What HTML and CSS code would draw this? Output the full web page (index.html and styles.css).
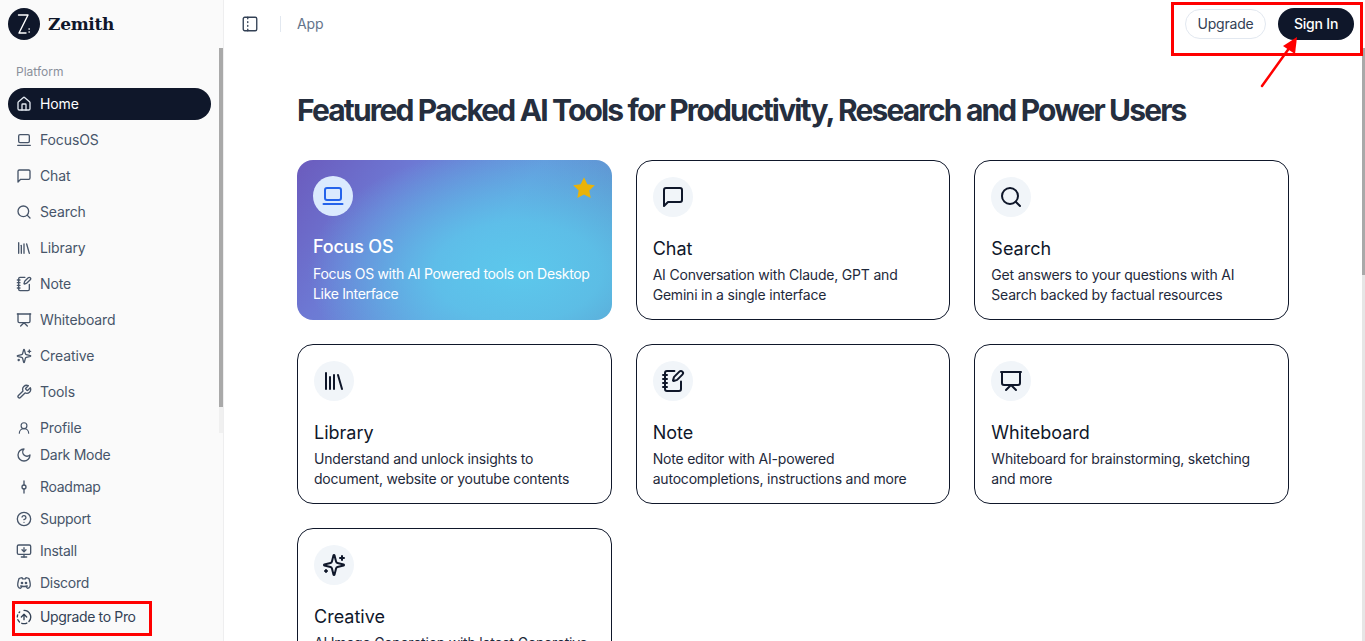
FILE: index.html
```html
<!DOCTYPE html>
<html lang="en">
<head>
<meta charset="utf-8">
<title>Zemith</title>
<link rel="stylesheet" href="styles.css">
</head>
<body>
<svg class="sprite" aria-hidden="true">
  <symbol id="i-home" viewBox="0 0 24 24"><path d="M15 21v-8a1 1 0 0 0-1-1h-4a1 1 0 0 0-1 1v8"/><path d="M3 10a2 2 0 0 1 .709-1.528l7-5.999a2 2 0 0 1 2.582 0l7 5.999A2 2 0 0 1 21 10v9a2 2 0 0 1-2 2H5a2 2 0 0 1-2-2z"/></symbol>
  <symbol id="i-laptop" viewBox="0 0 24 24"><rect x="4" y="4" width="16" height="12" rx="2"/><path d="M2.5 20h19"/></symbol>
  <symbol id="i-chat" viewBox="0 0 24 24"><path d="M21 15a2 2 0 0 1-2 2H7l-4 4V5a2 2 0 0 1 2-2h14a2 2 0 0 1 2 2z"/></symbol>
  <symbol id="i-search" viewBox="0 0 24 24"><circle cx="11" cy="11" r="8"/><path d="m21 21-4.3-4.3"/></symbol>
  <symbol id="i-library" viewBox="0 0 24 24"><path d="m16 6 4 14"/><path d="M12 6v14"/><path d="M8 8v12"/><path d="M4 4v16"/></symbol>
  <symbol id="i-note" viewBox="0 0 24 24"><path d="M13.4 2H6a2 2 0 0 0-2 2v16a2 2 0 0 0 2 2h12a2 2 0 0 0 2-2v-7.4"/><path d="M2 6h4"/><path d="M2 10h4"/><path d="M2 14h4"/><path d="M2 18h4"/><path d="M21.378 5.626a1 1 0 1 0-3.004-3.004l-5.01 5.012a2 2 0 0 0-.506.854l-.837 2.87a.5.5 0 0 0 .62.62l2.87-.837a2 2 0 0 0 .854-.506z"/></symbol>
  <symbol id="i-board" viewBox="0 0 24 24"><path d="M2 3h20"/><path d="M21 3v11a2 2 0 0 1-2 2H5a2 2 0 0 1-2-2V3"/><path d="m7 21 5-5 5 5"/></symbol>
  <symbol id="i-sparkle" viewBox="0 0 24 24"><path d="M9.937 15.5A2 2 0 0 0 8.5 14.063l-6.135-1.582a.5.5 0 0 1 0-.962L8.5 9.936A2 2 0 0 0 9.937 8.5l1.582-6.135a.5.5 0 0 1 .963 0L14.063 8.5A2 2 0 0 0 15.5 9.937l6.135 1.581a.5.5 0 0 1 0 .964L15.5 14.063a2 2 0 0 0-1.437 1.437l-1.582 6.135a.5.5 0 0 1-.963 0z"/><path d="M20 3v4"/><path d="M22 5h-4"/><path d="M4 17v2"/><path d="M5 18H3"/></symbol>
  <symbol id="i-wrench" viewBox="0 0 24 24"><path d="M14.7 6.3a1 1 0 0 0 0 1.4l1.6 1.6a1 1 0 0 0 1.4 0l3.77-3.77a6 6 0 0 1-7.94 7.94l-6.91 6.91a2.12 2.12 0 0 1-3-3l6.91-6.91a6 6 0 0 1 7.94-7.94l-3.76 3.76z"/></symbol>
  <symbol id="i-user" viewBox="0 0 24 24"><circle cx="12" cy="8" r="5"/><path d="M20 21a8 8 0 0 0-16 0"/></symbol>
  <symbol id="i-moon" viewBox="0 0 24 24"><path d="M12 3a6 6 0 0 0 9 9 9 9 0 1 1-9-9Z"/></symbol>
  <symbol id="i-commit" viewBox="0 0 24 24"><path d="M12 3v6"/><circle cx="12" cy="12" r="3"/><path d="M12 15v6"/></symbol>
  <symbol id="i-help" viewBox="0 0 24 24"><circle cx="12" cy="12" r="10"/><path d="M9.09 9a3 3 0 0 1 5.83 1c0 2-3 3-3 3"/><path d="M12 17h.01"/></symbol>
  <symbol id="i-install" viewBox="0 0 24 24"><path d="M12 13V7"/><path d="m15 10-3 3-3-3"/><rect x="2" y="3" width="20" height="14" rx="2"/><path d="M12 17v4"/><path d="M8 21h8"/></symbol>
  <symbol id="i-discord" viewBox="0 0 24 24"><path d="M8 12a1 1 0 1 0 2 0a1 1 0 0 0 -2 0"/><path d="M14 12a1 1 0 1 0 2 0a1 1 0 0 0 -2 0"/><path d="M15.5 17c0 1 1.5 3 2 3c1.5 0 2.833 -1.667 3.5 -3c.667 -1.667 .5 -5.833 -1.5 -11.5c-1.457 -1.015 -3 -1.34 -4.5 -1.5l-.972 1.923a11.913 11.913 0 0 0 -4.053 0l-.975 -1.923c-1.5 .16 -3.043 .485 -4.5 1.5c-2 5.667 -2.167 9.833 -1.5 11.5c.667 1.333 2 3 3.5 3c.5 0 2 -2 2 -3"/><path d="M7 16.5c3.5 1 6.5 1 10 0"/></symbol>
  <symbol id="i-upgrade" viewBox="0 0 24 24"><path d="M12 2a10 10 0 0 1 7.38 16.75"/><path d="m16 12-4-4-4 4"/><path d="M12 16V8"/><path d="M2.5 8.875a10 10 0 0 0-.5 3"/><path d="M2.83 16a10 10 0 0 0 2.43 3.4"/><path d="M4.636 5.235a10 10 0 0 1 .891-.857"/><path d="M8.644 21.42a10 10 0 0 0 7.631-.38"/></symbol>
  <symbol id="i-panel" viewBox="0 0 24 24"><rect x="3" y="3" width="18" height="18" rx="2"/><path d="M9 14v1"/><path d="M9 19v2"/><path d="M9 3v2"/><path d="M9 9v1"/></symbol>
</svg>

<div class="app">
  <aside class="sidebar">
    <div class="brand">
      <span class="brand-mark"><svg class="brand-z" viewBox="0 0 32 32"><path d="M10.500 7h9.500L11 25h7"/><path d="M21 21h.3M21 24h.3"/></svg></span>
      <span class="brand-name">Zemith</span>
    </div>
    <div class="side-scroll">
      <div class="group-label">Platform</div>
      <nav class="nav">
        <a class="nav-item active"><svg class="ic"><use href="#i-home"/></svg>Home</a>
        <a class="nav-item"><svg class="ic"><use href="#i-laptop"/></svg>FocusOS</a>
        <a class="nav-item"><svg class="ic"><use href="#i-chat"/></svg>Chat</a>
        <a class="nav-item"><svg class="ic"><use href="#i-search"/></svg>Search</a>
        <a class="nav-item"><svg class="ic"><use href="#i-library"/></svg>Library</a>
        <a class="nav-item"><svg class="ic"><use href="#i-note"/></svg>Note</a>
        <a class="nav-item"><svg class="ic"><use href="#i-board"/></svg>Whiteboard</a>
        <a class="nav-item"><svg class="ic"><use href="#i-sparkle"/></svg>Creative</a>
        <a class="nav-item"><svg class="ic"><use href="#i-wrench"/></svg>Tools</a>
        <a class="nav-item"><svg class="ic ic-small"><use href="#i-user"/></svg>Profile</a>
      </nav>
    </div>
    <div class="side-foot">
      <a class="nav-item"><svg class="ic"><use href="#i-moon"/></svg>Dark Mode</a>
      <a class="nav-item"><svg class="ic"><use href="#i-commit"/></svg>Roadmap</a>
      <a class="nav-item"><svg class="ic"><use href="#i-help"/></svg>Support</a>
      <a class="nav-item"><svg class="ic"><use href="#i-install"/></svg>Install</a>
      <a class="nav-item"><svg class="ic"><use href="#i-discord"/></svg>Discord</a>
      <a class="nav-item pro"><svg class="ic"><use href="#i-upgrade"/></svg>Upgrade to Pro</a>
    </div>
    <div class="sb sb-side-track"></div>
    <div class="sb sb-side-thumb"></div>
  </aside>

  <div class="main">
    <header class="topbar">
      <svg class="ic panel-ic"><use href="#i-panel"/></svg>
      <span class="divider"></span>
      <span class="crumb">App</span>
      <div class="top-actions">
        <button class="btn btn-ghost">Upgrade</button>
        <button class="btn btn-dark">Sign In</button>
      </div>
    </header>
    <main class="scroll">
      <div class="content">
        <h1 class="title">Featured Packed AI Tools for Productivity, Research and Power Users</h1>
        <div class="grid">
          <article class="card card-featured">
            <span class="card-icon"><svg class="ic24"><use href="#i-laptop"/></svg></span>
            <svg class="star" viewBox="0 0 24 24"><path d="M12 1.200l3.300 7 7.500 1-5.500 5.300 1.400 7.600-6.700-3.700-6.700 3.700 1.400-7.600L1.200 9.200l7.500-1z"/></svg>
            <h2 class="card-title">Focus OS</h2>
            <p class="card-desc">Focus OS with AI Powered tools on Desktop Like Interface</p>
          </article>
          <article class="card">
            <span class="card-icon"><svg class="ic24"><use href="#i-chat"/></svg></span>
            <h2 class="card-title">Chat</h2>
            <p class="card-desc">AI Conversation with Claude, GPT and Gemini in a single interface</p>
          </article>
          <article class="card">
            <span class="card-icon"><svg class="ic24"><use href="#i-search"/></svg></span>
            <h2 class="card-title">Search</h2>
            <p class="card-desc">Get answers to your questions with AI Search backed by factual resources</p>
          </article>
          <article class="card">
            <span class="card-icon"><svg class="ic24"><use href="#i-library"/></svg></span>
            <h2 class="card-title">Library</h2>
            <p class="card-desc">Understand and unlock insights to document, website or youtube contents</p>
          </article>
          <article class="card">
            <span class="card-icon"><svg class="ic24"><use href="#i-note"/></svg></span>
            <h2 class="card-title">Note</h2>
            <p class="card-desc">Note editor with AI-powered autocompletions, instructions and more</p>
          </article>
          <article class="card">
            <span class="card-icon"><svg class="ic24"><use href="#i-board"/></svg></span>
            <h2 class="card-title">Whiteboard</h2>
            <p class="card-desc">Whiteboard for brainstorming, sketching and more</p>
          </article>
          <article class="card">
            <span class="card-icon"><svg class="ic24"><use href="#i-sparkle"/></svg></span>
            <h2 class="card-title">Creative</h2>
            <p class="card-desc">AI Image Generation with latest Generative Models</p>
          </article>
        </div>
      </div>
    </main>
  </div>
</div>

<div class="sb sb-main-track"></div>
<div class="sb sb-main-thumb"></div>
<div class="mark mark-top"></div>
<div class="mark mark-pro"></div>
<svg class="arrow" viewBox="0 0 60 70"><path class="arrow-line" d="M3 63 31 24"/><path class="arrow-head" d="M38 14 36 31 24 23z"/></svg>
</body>
</html>
```
FILE: styles.css
```css
* { box-sizing: border-box; }
html, body { margin: 0; height: 100%; overflow: hidden; background: #fff; }
body { font-family: Inter, "Noto Sans", sans-serif; font-size: 14px; color: #0f172a; }
.sprite { display: none; }
.ic, .ic24 { fill: none; stroke: currentColor; stroke-width: 2; stroke-linecap: round; stroke-linejoin: round; flex: none; }
.ic { width: 16px; height: 16px; }
.ic24 { width: 24px; height: 24px; }
.ic-small { width: 14px; height: 14px; margin: 0 1px; }

.app { display: flex; height: 641px; }

.sidebar { position: relative; width: 224px; flex: none; height: 100%; display: flex; flex-direction: column; background: #fafafa; border-right: 1px solid #eeeeef; }
.brand { height: 48px; flex: none; display: flex; align-items: center; gap: 8px; padding: 0 0 0 8px; }
.brand-mark { width: 32px; height: 32px; border-radius: 50%; background: #0f172a; display: flex; }
.brand-z { width: 32px; height: 32px; fill: none; stroke: #fff; stroke-width: 1.4; stroke-linecap: round; stroke-linejoin: round; }
.brand-name { font-family: "DejaVu Serif", serif; font-weight: 700; font-size: 17px; letter-spacing: -0.28px; color: #0f172a; }

.side-scroll { height: 388px; flex: none; overflow: hidden; padding: 8px 8px 0; }
.group-label { height: 32px; line-height: 32px; padding-left: 8px; font-size: 12px; color: #8a909b; }
.nav { display: flex; flex-direction: column; gap: 4px; }
.nav-item { height: 32px; display: flex; align-items: center; gap: 8px; padding: 0 0 1px 8px; border-radius: 16px; color: #475569; white-space: nowrap; flex: none; letter-spacing: -0.12px; }
.nav-item.active { background: #0f172a; color: #fff; width: 203px; }
.nav-item.active .ic { color: #e2e8f0; }
.side-foot { padding: 3px 8px 0; display: flex; flex-direction: column; }
.side-foot .nav-item { letter-spacing: -0.28px; }
.side-foot .pro { margin-top: 2px; color: #334155; letter-spacing: -0.35px; }

.sb { position: absolute; }
.sb-side-track { left: 219px; top: 407px; width: 4px; height: 26px; background: #f0f0f0; }
.sb-side-thumb { left: 219px; top: 48px; width: 4px; height: 359px; background: #a9a9a9; }
.sb-main-track { left: 1362px; top: 275px; width: 3px; height: 366px; background: #e6e6e6; }
.sb-main-thumb { left: 1362px; top: 48px; width: 3px; height: 227px; background: #a9a9a9; }

.main { flex: 1; min-width: 0; height: 100%; display: flex; flex-direction: column; }
.topbar { height: 48px; flex: none; display: flex; align-items: center; padding: 0 11px 0 17px; }
.panel-ic { width: 18px; height: 18px; color: #334155; stroke-width: 1.8; }
.divider { width: 1px; height: 16px; background: #e2e8f0; margin: 0 16px 0 21px; }
.crumb { color: #64748b; padding-bottom: 2px; letter-spacing: -0.1px; }
.top-actions { margin-left: auto; display: flex; align-items: center; gap: 12px; }
.btn { font: inherit; border-radius: 16px; cursor: pointer; padding: 0 0 2px; letter-spacing: -0.2px; }
.btn-ghost { width: 81px; height: 30px; background: #fff; border: 1px solid #e2e8f0; color: #334155; }
.btn-dark { width: 76px; height: 32px; background: #0f172a; border: 0; color: #fff; font-weight: 500; }

.scroll { flex: 1; min-height: 0; overflow: hidden; padding-right: 3px; }
.content { width: 992px; margin: 0 auto; padding-top: 42px; }
.title { margin: 0 0 30px; font-size: 30px; line-height: 40px; font-weight: 700; letter-spacing: -1.84px; color: #252e3e; white-space: nowrap; }
.grid { display: grid; grid-template-columns: repeat(3, 1fr); gap: 24px; }
.card { position: relative; height: 160px; border: 1px solid #0f172a; border-radius: 16px; padding: 16px; background: #fff; }
.card-icon { width: 40px; height: 40px; border-radius: 50%; background: #f1f5f9; color: #0f172a; display: flex; align-items: center; justify-content: center; }
.card-title { margin: 21px 0 0; font-size: 18px; line-height: 22px; font-weight: 400; color: #0f172a; }
.card-desc { margin: 5px 0 0; font-size: 14px; line-height: 20px; letter-spacing: -0.2px; color: #1e293b; }
.card-featured { border: 0; color: #fff; background:
  radial-gradient(ellipse 210px 125px at 70% 70%, #5cc8ec 0%, rgba(92,200,236,.8) 40%, rgba(92,200,236,0) 100%),
  linear-gradient(125deg, #6b5bbd 0%, #6d79d4 28%, #6498dc 58%, #5a90c4 100%); }
.card-featured .card-icon { background: #dbeafe; color: #2563eb; }
.card-featured .card-title { margin-top: 20px; font-weight: 500; color: #fff; letter-spacing: -0.2px; }
.card-featured .card-desc { margin-top: 6px; color: #fff; letter-spacing: -0.32px; }
.star { position: absolute; top: 16px; right: 16px; width: 24px; height: 24px; fill: #eab308; }

.mark { position: absolute; border: 3px solid #f00; }
.mark-top { left: 1171px; top: 2px; width: 192px; height: 54px; }
.mark-pro { left: 12px; top: 601px; width: 140px; height: 35px; }
.arrow { position: absolute; left: 1259px; top: 23px; width: 60px; height: 70px; }
.arrow-line { fill: none; stroke: #f00; stroke-width: 2.5; stroke-linecap: round; }
.arrow-head { fill: #f00; }
```
